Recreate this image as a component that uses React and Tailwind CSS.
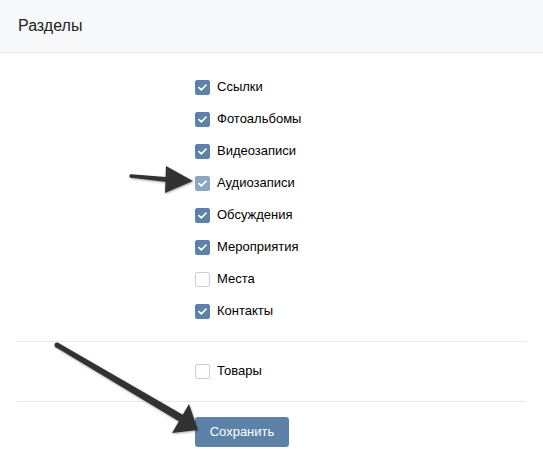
import { useState } from 'react';

const SECTIONS = [
  { key: 'links', label: 'Ссылки', checked: true },
  { key: 'photos', label: 'Фотоальбомы', checked: true },
  { key: 'videos', label: 'Видеозаписи', checked: true },
  { key: 'audio', label: 'Аудиозаписи', checked: true, muted: true },
  { key: 'topics', label: 'Обсуждения', checked: true },
  { key: 'events', label: 'Мероприятия', checked: true },
  { key: 'places', label: 'Места', checked: false },
  { key: 'contacts', label: 'Контакты', checked: true },
];

function Checkbox({ label, checked, muted, onToggle }) {
  const box = checked
    ? muted
      ? 'bg-[#8ea5c1] border-[#8ea5c1]'
      : 'bg-[#5e81a8] border-[#5e81a8]'
    : 'bg-white border-[#c5d0db]';

  return (
    <label className="flex h-8 cursor-pointer items-center gap-[7px]" onClick={onToggle}>
      <span className={`flex h-[15px] w-[15px] items-center justify-center rounded-[2px] border ${box}`}>
        {checked && (
          <svg width="9" height="7" viewBox="0 0 9 7" fill="none">
            <path d="M1 3.6L3.3 5.8L8 1.2" stroke="white" strokeWidth="1.7" strokeLinecap="round" strokeLinejoin="round" />
          </svg>
        )}
      </span>
      <span className="text-[13px] text-black">{label}</span>
    </label>
  );
}

// Two hand-drawn pointer arrows laid over the form
function Pointers() {
  return (
    <svg className="pointer-events-none absolute inset-0" width="543" height="462">
      <defs>
        <filter id="soft" x="-20%" y="-20%" width="140%" height="140%">
          <feDropShadow dx="0.5" dy="1" stdDeviation="0.8" floodColor="#000" floodOpacity="0.35" />
        </filter>
      </defs>
      <g fill="#333" filter="url(#soft)">
        <polygon points="131,174.3 169,177.3 169,182.2 131,177.7" />
        <circle cx="131" cy="176" r="1.7" />
        <polygon points="166,166 193,181 165,193" />

        <polygon points="55.5,347 58.5,343 185,416 180,422" />
        <circle cx="57" cy="345" r="2.5" />
        <polygon points="189,404 198,430 172,433" />
      </g>
    </svg>
  );
}

export default function App() {
  const [items, setItems] = useState(SECTIONS);
  const [goods, setGoods] = useState(false);

  const toggle = (key) =>
    setItems((prev) => prev.map((it) => (it.key === key ? { ...it, checked: !it.checked } : it)));

  return (
    <div className="relative h-[462px] w-[543px] overflow-hidden bg-white font-['Liberation_Sans',Arial,sans-serif]">
      <div className="flex h-[53px] items-center border-b border-[#e7e8ec] bg-[#f7f8fa] px-[18px] pb-px">
        <h2 className="text-[16px] text-[#222]">Разделы</h2>
      </div>

      <div className="mx-[17px]">
        <div className="flex flex-col pl-[178px] pt-[18px] pb-[14px]">
          {items.map((it) => (
            <Checkbox
              key={it.key}
              label={it.label}
              checked={it.checked}
              muted={it.muted}
              onToggle={() => toggle(it.key)}
            />
          ))}
        </div>

        <div className="border-t border-[#e7e8ec] pl-[178px] pt-[13px] pb-[14px]">
          <Checkbox label="Товары" checked={goods} onToggle={() => setGoods((v) => !v)} />
        </div>

        <div className="border-t border-[#e7e8ec] pl-[178px] pt-[15px]">
          <button className="h-[30px] w-[94px] rounded-[3px] bg-[#5e81a8] text-[13px] text-white">
            Сохранить
          </button>
        </div>
      </div>

      <Pointers />
    </div>
  );
}
